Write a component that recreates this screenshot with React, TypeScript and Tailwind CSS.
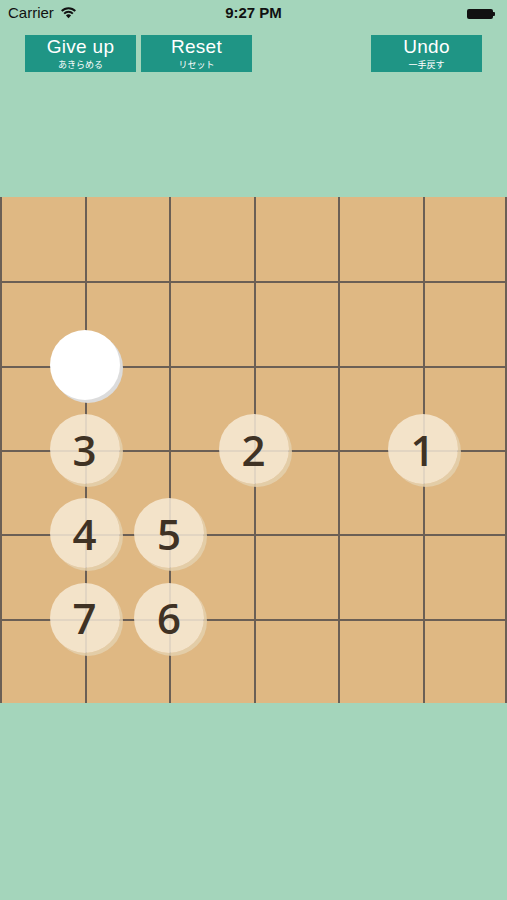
import React from 'react';

const stones = [
  { col: 3, row: 3, n: '2' },
  { col: 5, row: 3, n: '1' },
  { col: 1, row: 3, n: '3' },
  { col: 1, row: 4, n: '4' },
  { col: 2, row: 4, n: '5' },
  { col: 2, row: 5, n: '6' },
  { col: 1, row: 5, n: '7' },
];

const CELL_W = 507 / 6;
const CELL_H = 506 / 6;

const GameButton = ({ label, sub }: { label: string; sub: string }) => (
  <button className="w-[111px] h-[37px] bg-[#1f9585] flex flex-col items-center justify-center text-white">
    <span className="text-[19px] leading-[22px] tracking-[0.3px]" style={{ fontFamily: '"Liberation Sans", sans-serif' }}>{label}</span>
    <span className="text-[9px] leading-[13px]" style={{ fontFamily: '"Noto Sans CJK JP", sans-serif' }}>{sub}</span>
  </button>
);

const App = () => {
  return (
    <div className="w-full h-[900px] bg-[#a4d5bb] flex flex-col overflow-hidden" style={{ fontFamily: '"Noto Sans", "Noto Sans CJK JP", sans-serif' }}>
      {/* status bar */}
      <div className="relative h-[27px] flex items-center px-[8px] text-[#111] text-[15px]" style={{ fontFamily: '"Liberation Sans", sans-serif' }}>
        <span>Carrier</span>
        <svg width="17" height="13" viewBox="0 0 16 12" className="ml-[6px] -mt-[3px]">
          <path d="M8 11.5 L5.6 8.8 A3.4 3.4 0 0 1 10.4 8.8 Z" fill="#111" />
          <path d="M3.9 7 A5.8 5.8 0 0 1 12.1 7" stroke="#111" strokeWidth="1.8" fill="none" />
          <path d="M1.6 4.6 A9 9 0 0 1 14.4 4.6" stroke="#111" strokeWidth="1.8" fill="none" />
        </svg>
        <span className="absolute left-1/2 -translate-x-1/2 font-bold">9:27 PM</span>
        <div className="ml-auto flex items-center mr-[4px]">
          <div className="w-[26px] h-[10px] bg-[#111] rounded-[2px]" />
          <div className="w-[2px] h-[4px] bg-[#111] rounded-r-[1px]" />
        </div>
      </div>

      {/* buttons */}
      <div className="flex mt-[8px] pl-[25px] pr-[25px] gap-[5px]">
        <GameButton label="Give up" sub="あきらめる" />
        <GameButton label="Reset" sub="リセット" />
        <div className="ml-auto">
          <GameButton label="Undo" sub="一手戻す" />
        </div>
      </div>

      {/* board */}
      <div className="relative mt-[125px] w-[507px] h-[506px] bg-[#dfb883]">
        <div className="grid grid-cols-6 grid-rows-6 w-full h-full">
          {Array.from({ length: 36 }).map((_, i) => {
            const r = Math.floor(i / 6);
            const c = i % 6;
            return (
              <div
                key={i}
                className={
                  'border-[#6b5f55] border-l-2 ' +
                  (r > 0 ? 'border-t-2 ' : '') +
                  (c === 5 ? 'border-r-2' : '')
                }
              />
            );
          })}
        </div>

        {/* white stone */}
        <div
          className="absolute w-[70px] h-[70px] rounded-full bg-white shadow-[3px_3px_0_#dcdcdc]"
          style={{ left: CELL_W * 1 - 35, top: CELL_H * 2 - 36 }}
        />

        {stones.map((s) => (
          <div
            key={s.n}
            className="absolute w-[70px] h-[70px] rounded-full bg-[#f7ead6]/85 shadow-[3px_3px_0_rgba(228,208,174,0.85)] flex items-center justify-center text-[#3f3224] text-[42px] font-semibold"
            style={{ left: CELL_W * s.col - 35, top: CELL_H * s.row - 36, fontFamily: '"Open Sans", sans-serif' }}
          >
            {s.n}
          </div>
        ))}
      </div>
    </div>
  );
};

export default App;
